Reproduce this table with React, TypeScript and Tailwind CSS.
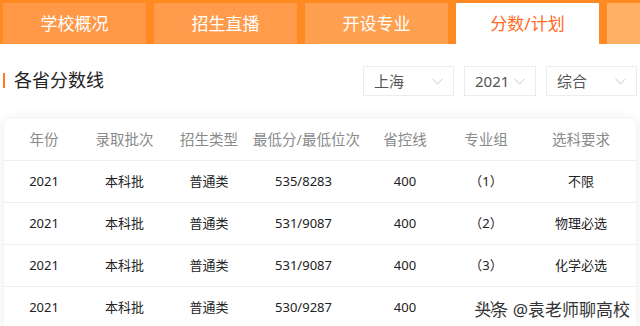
import React from "react";

const tabs = [
  { label: "学校概况", bg: "bg-[#ff9847]", active: false },
  { label: "招生直播", bg: "bg-[#ff9b4b]", active: false },
  { label: "开设专业", bg: "bg-[#ff9f50]", active: false },
  { label: "分数/计划", bg: "bg-white", active: true },
  { label: "", bg: "bg-[#ffb064]", active: false },
];

const rows = [
  ["2021", "本科批", "普通类", "535/8283", "400", "（1）", "不限"],
  ["2021", "本科批", "普通类", "531/9087", "400", "（2）", "物理必选"],
  ["2021", "本科批", "普通类", "531/9087", "400", "（3）", "化学必选"],
  ["2021", "本科批", "普通类", "530/9287", "400", "（4）", ""],
];

const headers = ["年份", "录取批次", "招生类型", "最低分/最低位次", "省控线", "专业组", "选科要求"];

const font = "font-['Noto_Sans','Noto_Sans_CJK_SC',sans-serif]";
const cols = "grid grid-cols-[80px_81px_88px_101px_102px_60px_116px_4px]";

function Chevron() {
  return (
    <svg width="11" height="7" viewBox="0 0 11 7" fill="none">
      <path d="M0.5 0.8 L5.5 6 L10.5 0.8" stroke="#c8c8c8" strokeWidth="1" />
    </svg>
  );
}

function Select({ label, w }: { label: string; w: string }) {
  return (
    <div className={`${w} h-[30px] border border-[#ececec] flex items-center justify-between pl-[10px] pr-[10px] text-[15px] text-[#555]`}>
      <span className="leading-none">{label}</span>
      <Chevron />
    </div>
  );
}

function Cell({ c, j }: { c: string; j: number }) {
  return <div className={`text-center whitespace-nowrap ${j === 6 ? "pl-[14px]" : ""}`}>{c}</div>;
}

export default function App() {
  return (
    <div className={`w-[640px] h-[326px] overflow-hidden bg-white relative ${font}`}>
      <div className="h-[44px] bg-[#ff8a22] pt-[3px] pl-[3px] flex gap-[8px]">
        {tabs.map((t, i) => (
          <div
            key={i}
            className={`w-[143px] shrink-0 h-[41px] flex items-center justify-center text-[17px] ${t.bg} ${t.active ? "text-[#ff6a1e]" : "text-white"}`}
          >
            {t.label}
          </div>
        ))}
      </div>

      <div className="h-[75px] flex items-center justify-between pr-[3px]">
        <div className="flex items-center mb-[4px]">
          <div className="w-[2px] h-[15px] bg-[#ff7a22] ml-[3px] mt-[2px]" />
          <div className="ml-[9px] text-[18px] text-[#222] leading-none">各省分数线</div>
        </div>
        <div className="flex gap-[10px] mb-[1px]">
          <Select label="上海" w="w-[91px]" />
          <Select label="2021" w="w-[72px]" />
          <Select label="综合" w="w-[91px]" />
        </div>
      </div>

      <div className="mx-[4px] bg-white rounded-t-[7px] shadow-[0_0_14px_rgba(0,0,0,0.08)]">
        <div className={`${cols} h-[42px] items-center border-b border-[#f0f0f0] text-[14.5px] text-[#8a8a8a]`}>
          {headers.map((h, j) => (
            <Cell key={h} c={h} j={j} />
          ))}
          <div />
        </div>
        {rows.map((r, i) => (
          <div key={i} className={`${cols} h-[42px] items-center border-b border-[#f0f0f0] text-[13px] text-[#222]`}>
            {r.map((c, j) => (
              <Cell key={j} c={c} j={j} />
            ))}
            <div />
          </div>
        ))}
      </div>

      <div className="absolute right-[10px] bottom-[8px] text-[17px] text-[#333] leading-none [text-shadow:0_0_2px_#fff,0_0_2px_#fff]">
        头条 @袁老师聊高校
      </div>
    </div>
  );
}
